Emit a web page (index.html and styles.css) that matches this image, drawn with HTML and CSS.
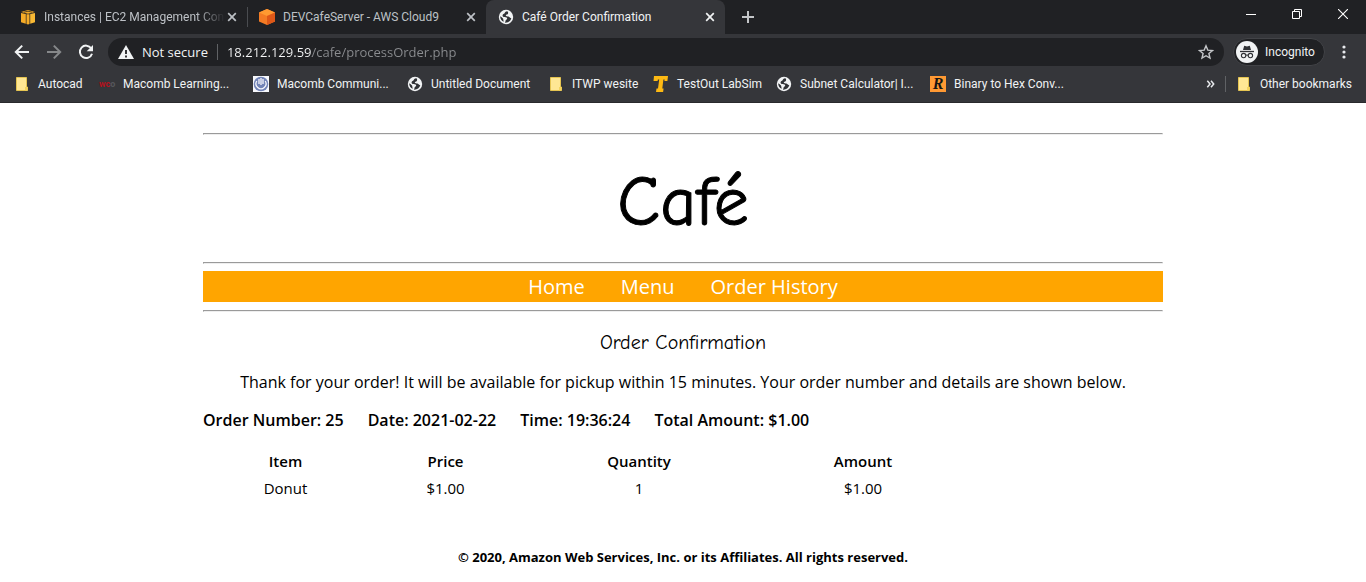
FILE: index.html
```html
<!DOCTYPE html>
<html lang="en">
<head>
<meta charset="utf-8">
<title>Café Order Confirmation</title>
<link rel="stylesheet" href="styles.css">
</head>
<body>
<svg class="defs" aria-hidden="true">
  <symbol id="close" viewBox="0 0 10 10"><path d="M1.2 1.2l7.6 7.6M8.8 1.2L1.2 8.8" stroke="currentColor" stroke-width="1.7"/></symbol>
  <symbol id="globe" viewBox="0 0 16 16"><circle cx="8" cy="8" r="7.2" fill="#f1f3f4"/><path d="M9 2.300C6.600 2.700 7.200 4.200 6 4.800 4.600 5.400 4.200 6.400 4.900 7.400 5.700 8.300 7.500 7.900 8.600 8.500c1 .7.600 1.800-.4 2.200-1 .5-.5 1.500-1.200 3 2.900.2 5.600-1.500 6.300-4.400-1.100-.2-1.800-1.100-2.800-1.700-1-.6-2.500-.2-2.700-1.200-.1-1 1.400-.8 2-1.500.6-.7.500-2.600-.8-2.600zM2.200 7.200c1 .5 2 1.300 2.800 2.200.5.700.3 2 .8 3.300-2.300-.7-3.700-3.100-3.600-5.500z" fill="#303236"/></symbol>
  <symbol id="folder" viewBox="0 0 12 14"><path d="M.5.5h10v9.500h1v3.500H.5z" fill="#ffe794" stroke="#e5c451"/><path d="M9 10h2.500v3.500H9z" fill="#f3d35f"/></symbol>
</svg>

<header class="browser">
  <div class="tabstrip">
    <div class="tab">
      <svg class="favicon" viewBox="0 0 16 16"><path d="M1 4l4.800 1v9.700L1 13.300zM6.500 5.200h3v9.900L8 15.500l-1.500-.4z" fill="#f5ab27"/><path d="M15 4l-4.800 1v9.700l4.800-1.400z" fill="#f9b934"/><path d="M1 3L8 1l7 2-7 1.700z" fill="#f5ab27"/><path d="M4 3.200l4-1 4 1" stroke="#5b451f" fill="none"/></svg>
      <button class="tab-title faded">Instances | EC2 Management Con</button>
      <button class="tab-close" aria-label="Close tab"><svg><use href="#close"/></svg></button>
    </div>
    <div class="tab second">
      <svg class="favicon" viewBox="0 0 16 16"><path d="M8 0l8 3.500v9L8 16l-8-3.500v-9z" fill="#f47b24"/><path d="M8 0l8 3.500L8 7 0 3.500z" fill="#ff9a31"/><path d="M8 7l8-3.500v9L8 16z" fill="#df5818"/></svg>
      <button class="tab-title">DEVCafeServer - AWS Cloud9</button>
      <button class="tab-close" aria-label="Close tab"><svg><use href="#close"/></svg></button>
    </div>
    <div class="tab active">
      <svg class="favicon"><use href="#globe"/></svg>
      <button class="tab-title">Café Order Confirmation</button>
      <button class="tab-close" aria-label="Close tab"><svg><use href="#close"/></svg></button>
    </div>
    <button class="new-tab" aria-label="New tab"><svg viewBox="0 0 12 12"><path d="M6 0v12M0 6h12" stroke="#c3c5c8" stroke-width="2"/></svg></button>
    <div class="window-controls">
      <button aria-label="Minimize"><svg viewBox="0 0 10 10"><path d="M0 5.500h10" stroke="#fff"/></svg></button>
      <button aria-label="Restore"><svg viewBox="0 0 10 10"><path d="M.5 2.500h7v7h-7zM2.500 2.500v-2h7v7h-2" fill="none" stroke="#fff"/></svg></button>
      <button aria-label="Close"><svg viewBox="0 0 10 10"><path d="M0 0l10 10M10 0L0 10" stroke="#fff" stroke-width="1.100"/></svg></button>
    </div>
  </div>

  <div class="toolbar">
    <div class="nav-buttons">
      <button aria-label="Back"><svg viewBox="0 0 16 16"><path d="M15 8H2M8.200 1.600L1.800 8l6.400 6.400" fill="none" stroke="#f1f3f4" stroke-width="2"/></svg></button>
      <button aria-label="Forward"><svg viewBox="0 0 16 16"><path d="M1 8h13M7.800 1.600L14.200 8l-6.400 6.400" fill="none" stroke="#86888a" stroke-width="2"/></svg></button>
      <button aria-label="Reload"><svg viewBox="0 0 16 16"><path d="M13.200 4.300A6.200 6.200 0 1 0 14 9.700" fill="none" stroke="#f1f3f4" stroke-width="2"/><path d="M15 1v6.300H8.700z" fill="#f1f3f4"/></svg></button>
    </div>
    <div class="omnibox">
      <svg class="warning" viewBox="0 0 16 14"><path d="M8 0l8 14H0z" fill="#f1f3f4"/><path d="M8 5v4M8 10.500v2" stroke="#202124" stroke-width="1.800"/></svg>
      <label for="address">Not secure</label>
      <span class="divider"></span>
      <input id="address" type="text" value="18.212.129.59/cafe/processOrder.php" spellcheck="false">
      <button class="star" aria-label="Bookmark this page"><svg viewBox="0 0 16 16"><path d="M8 1.800l1.800 4.300 4.700.4-3.600 3 1.100 4.600L8 11.700l-4 2.400 1.100-4.600-3.600-3 4.700-.4z" fill="none" stroke="#c4c6c9" stroke-width="1.400"/></svg></button>
    </div>
    <button class="profile">
      <svg viewBox="0 0 22 22"><circle cx="11" cy="11" r="11" fill="#f1f3f4"/><path d="M7 9l1.200-4.200 2.800.6 2.800-.6L15 9z" fill="#303236"/><path d="M4 10.500h14" stroke="#303236" stroke-width="1.300"/><g fill="none" stroke="#303236" stroke-width="1.100"><circle cx="7.600" cy="14.600" r="2.200"/><circle cx="14.400" cy="14.600" r="2.200"/><path d="M9.800 14.300q1.200-.7 2.400 0"/></g></svg>
      <span>Incognito</span>
    </button>
    <button class="menu" aria-label="Menu"><svg viewBox="0 0 4 14"><g fill="#e8eaed"><circle cx="2" cy="2" r="1.600"/><circle cx="2" cy="7" r="1.600"/><circle cx="2" cy="12" r="1.600"/></g></svg></button>
  </div>

  <nav class="bookmarks" aria-label="Bookmarks">
    <a class="b-autocad" href="#"><svg class="folder"><use href="#folder"/></svg>Autocad</a>
    <a class="b-learning" href="#"><span class="wco">wc<i>o</i></span>Macomb Learning...</a>
    <a class="b-community" href="#"><svg viewBox="0 0 16 16"><path d="M0 0h16v16H0z" fill="#f7f8fc"/><circle cx="8" cy="8" r="7.300" fill="#7183b7"/><path d="M3.800 5A5 5 0 1 0 12.200 5M8 2v7M6 3v5M10 3v5" fill="none" stroke="#f7f8fc" stroke-width="1.300"/></svg>Macomb Communi...</a>
    <a class="b-untitled" href="#"><svg><use href="#globe"/></svg>Untitled Document</a>
    <a class="b-itwp" href="#"><svg class="folder"><use href="#folder"/></svg>ITWP wesite</a>
    <a class="b-testout" href="#"><svg viewBox="0 0 16 16"><path d="M1 0h14l-.6 5h-3l.2-1.500h-1.200L9.300 12.500h1.300L10.100 16H3l.5-3.500H5l1.200-9H4.900L4.600 5H.500z" fill="#fdb913"/></svg>TestOut LabSim</a>
    <a class="b-subnet" href="#"><svg><use href="#globe"/></svg>Subnet Calculator| I...</a>
    <a class="b-hex" href="#"><span class="letter-icon">R</span>Binary to Hex Conv...</a>
    <button class="more" aria-label="More bookmarks"><svg viewBox="0 0 8 8"><path d="M.8.800L3.500 4 .8 7.200M4.500.800L7.200 4 4.500 7.200" fill="none" stroke="#e8eaed" stroke-width="1.500"/></svg></button>
    <span class="divider"></span>
    <a class="b-other" href="#"><svg class="folder"><use href="#folder"/></svg>Other bookmarks</a>
  </nav>
</header>

<main class="page">
  <hr>
  <h1>Café</h1>
  <hr>
  <nav class="site-nav">
    <a href="#">Home</a>
    <a href="#">Menu</a>
    <a href="#">Order History</a>
  </nav>
  <hr>
  <h2>Order Confirmation</h2>
  <p class="thanks">Thank for your order! It will be available for pickup within 15 minutes. Your order number and details are shown below.</p>
  <div class="summary">
    <span>Order Number: 25</span>
    <span>Date: 2021-02-22</span>
    <span>Time: 19:36:24</span>
    <span>Total Amount: $1.00</span>
  </div>
  <table class="items">
    <thead><tr><th class="c-item">Item</th><th class="c-price">Price</th><th class="c-qty">Quantity</th><th class="c-amount">Amount</th></tr></thead>
    <tbody><tr><td>Donut</td><td>$1.00</td><td>1</td><td>$1.00</td></tr></tbody>
  </table>
  <footer>© 2020, Amazon Web Services, Inc. or its Affiliates. All rights reserved.</footer>
</main>
</body>
</html>
```
FILE: styles.css
```css
* { box-sizing: border-box; }
body { margin: 0; background: #fff; color: #000; font-family: "Lucida Sans Unicode", "Open Sans", sans-serif; font-size: 15px; }
button { padding: 0; border: 0; background: none; color: inherit; font: inherit; text-align: left; }
a { color: inherit; text-decoration: none; }
.defs { display: none; }

.browser { background: #35363a; border-bottom: 1px solid #29292c; color: #f1f3f4; font-family: "Segoe UI", Roboto, sans-serif; font-size: 12px; }
.browser svg { display: block; flex: none; }
.browser button { display: flex; align-items: center; flex: none; }

.tabstrip { display: flex; align-items: center; height: 34px; padding-left: 8px; background: #202124; color: #bdc1c6; }
.tab { display: flex; align-items: center; gap: 8px; flex: 0 1 239px; min-width: 0; height: 34px; padding: 0 10px 0 12px; }
.second { background: linear-gradient(#4a4c50, #4a4c50) left center / 1px 20px no-repeat; }
.active { border-radius: 8px 8px 0 0; background: #35363a; color: #f1f3f4; }
.favicon { width: 16px; height: 16px; }
.browser .tab-title { display: block; flex: 1; min-width: 0; overflow: hidden; white-space: nowrap; }
.browser .faded { margin-right: -6px; mask-image: linear-gradient(90deg, #000 84%, transparent); }
.tab-close svg { width: 10px; height: 10px; }
.browser .new-tab { justify-content: center; width: 28px; height: 28px; margin-left: 9px; }
.new-tab svg { width: 12px; height: 12px; }
.window-controls { display: flex; align-self: flex-start; margin-left: auto; }
.browser .window-controls button { justify-content: center; width: 46px; height: 28px; }
.window-controls svg { width: 10px; height: 10px; }

.toolbar { display: flex; align-items: center; height: 36px; padding: 0 20px 0 14px; }
.nav-buttons { display: flex; gap: 16px; margin-right: 14px; }
.nav-buttons svg { width: 16px; height: 16px; }
.omnibox { display: flex; align-items: center; flex: 1; height: 28px; padding: 0 10px; border-radius: 14px; background: #202124; font-family: "Segoe UI", "Open Sans", sans-serif; font-size: 13px; }
.omnibox label { margin-left: 8px; }
.warning { width: 16px; height: 14px; }
.divider { width: 1px; height: 16px; background: #606265; }
.omnibox .divider { margin: 0 9px; }
.omnibox input { flex: 1; min-width: 0; padding: 0; border: 0; outline: 0; font: inherit; color: #fff; background: linear-gradient(90deg, #f8f9fa 85px, #8b8d90 85px); background-clip: text; -webkit-text-fill-color: transparent; }
.star svg { width: 16px; height: 16px; }
.browser .profile { gap: 7px; width: 92px; height: 28px; margin-left: 9px; padding: 0 0 0 2px; border: 1px solid #424347; border-radius: 14px; background: #202124; }
.profile svg { width: 22px; height: 22px; }
.menu { margin-left: 17px; }
.menu svg { width: 4px; height: 14px; }

.bookmarks { display: flex; align-items: center; height: 32px; padding: 0 14px 4px; }
.bookmarks a { display: flex; align-items: center; gap: 8px; flex: none; white-space: nowrap; }
.bookmarks a svg { width: 16px; height: 16px; }
.bookmarks a .folder { width: 12px; height: 14px; margin: 0 2px; }
.b-autocad { width: 85px; }
.b-learning { width: 154px; }
.b-community { width: 154px; }
.b-untitled { width: 141px; }
.b-itwp { width: 105px; }
.b-testout { width: 123px; }
.b-subnet { width: 154px; }
.wco { width: 16px; color: #b3121d; font-family: Roboto, sans-serif; font-size: 9px; font-weight: 700; }
.wco i { color: #55575a; font-style: normal; }
.letter-icon { width: 16px; height: 16px; background: #ff9933; color: #141414; font: italic 700 16px/16px "Liberation Serif", serif; text-align: center; }
.bookmarks .more { margin-left: auto; }
.more svg { width: 9px; height: 8px; }
.bookmarks .divider { margin: 0 10px; }

.page { width: min(960px, calc(100% - 16px)); margin: 30px auto 0; text-align: center; }
.page hr { margin: 8px 0; }
h1, h2 { margin: 0; font-family: "Comic Sans MS", "Comic Neue", cursive, "Open Sans", sans-serif; font-weight: 400; }
h1 { padding: 15px 0 6px; font-size: 70px; line-height: 90px; -webkit-text-stroke: 1px #000; }
.site-nav { display: flex; justify-content: center; gap: 36px; margin-top: -1px; background: orange; color: #fff; font-size: 20px; line-height: 31px; }
h2 { margin-top: 18px; font-size: 20px; line-height: 26px; }
.thanks { margin: 14px 0; font-size: 16px; line-height: 24px; }
.summary { display: flex; flex-wrap: wrap; gap: 24px; font-size: 16px; font-weight: 600; line-height: 24px; }
.items { width: 80%; margin: 16px 0 0; border-collapse: collapse; table-layout: fixed; line-height: 27px; }
.items th, .items td { padding: 0; }
.items th { font-weight: 600; }
.c-item { width: 165px; }
.c-price { width: 155px; }
.c-qty { width: 232px; }
footer { padding: 45px 0 16px; font-size: 13px; font-weight: 700; line-height: 20px; }
```
